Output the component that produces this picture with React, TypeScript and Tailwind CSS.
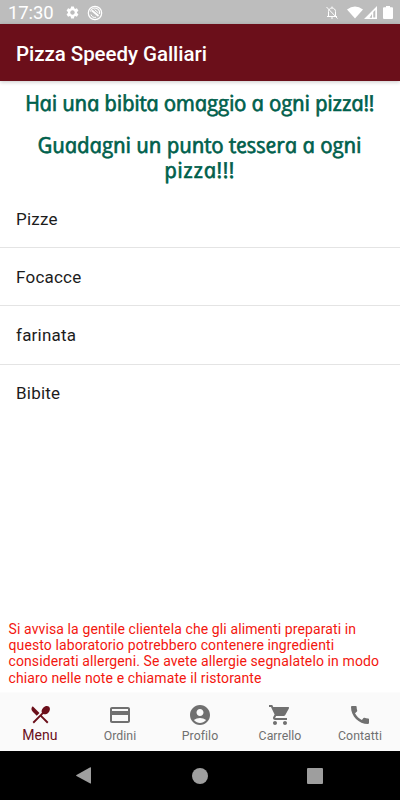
import React from "react";
import {
  MdAccountCircle,
  MdCall,
  MdPayment,
  MdRestaurantMenu,
  MdSettings,
  MdShoppingCart,
} from "react-icons/md";

const categories = ["Pizze", "Focacce", "farinata", "Bibite"];

const tabs = [
  { label: "Ordini", Icon: MdPayment },
  { label: "Profilo", Icon: MdAccountCircle },
  { label: "Carrello", Icon: MdShoppingCart },
  { label: "Contatti", Icon: MdCall },
];

function StatusBar() {
  return (
    <div className="flex h-[24px] items-center bg-[#bdbdbd] pr-[7px] pl-[8px] text-white">
      <span className="w-[57px] pt-[2px] text-[18.500px] leading-none tracking-[-0.100px]">17:30</span>
      <MdSettings className="mt-px size-[15px]" />
      <svg className="mt-px ml-[7px] size-[16px]" viewBox="0 0 16 16" fill="none" stroke="currentColor">
        <circle cx="8" cy="8" r="6.700" strokeWidth="1.200" />
        <path d="M3.500 6.500A4.600 4.600 0 0 1 12.500 9" strokeWidth="1.200" />
        <path d="M5 5.500l6.500 5.500" strokeWidth="1.800" />
        <path d="M4 9.500a4.300 4.300 0 0 0 5 2.800M7.500 4.500l4 3.500" strokeWidth="1" />
      </svg>
      <svg className="mt-px ml-auto h-[15px] w-[14px]" viewBox="0 0 14 15" fill="none" stroke="currentColor">
        <path d="M3.500 11V6.500C3.500 4.500 5 3 7 3s3.500 1.500 3.500 3.500V11M2 11.500h10M6 13h2M7 1.500V3M1.500 2l11 11.500" strokeWidth="1" />
      </svg>
      <svg className="mt-px ml-[8px] h-[13px] w-[16px]" viewBox="0 0 17 13" fill="currentColor">
        <path d="M0 3.300Q8.500-3 17 3.300L8.500 13Z" />
      </svg>
      <svg className="mt-px ml-px h-[13px] w-[13px]" viewBox="0 0 13 13" fill="currentColor">
        <path fillRule="evenodd" d="M0 13L13 0V13ZM5.500 11.700H8V8ZM9.300 6v5.500h2V4Z" />
      </svg>
      <svg className="mt-px ml-[6px] h-[13px] w-[10px]" viewBox="0 0 10 13" fill="currentColor">
        <path d="M3 0h4v1.300h2q1 0 1 1V12q0 1-1 1H1q-1 0-1-1V2.300q0-1 1-1h2Z" />
      </svg>
    </div>
  );
}

function Promo() {
  return (
    <div className="h-[109px] pt-[9px] pr-[2px] text-center font-['Open_Sans',sans-serif] text-[22px] leading-[25.500px] font-normal whitespace-nowrap text-[#00604c] italic [-webkit-text-stroke:0.600px_#00604c]">
      <p className="skew-x-[12deg] tracking-[-0.350px]">Hai una bibita omaggio a ogni pizza!!</p>
      <p className="mt-[16px] skew-x-[12deg] tracking-[-0.200px]">Guadagni un punto tessera a ogni</p>
      <p className="skew-x-[12deg] tracking-[0.450px]">pizza!!!</p>
    </div>
  );
}

export default function App() {
  return (
    <div className="flex h-[800px] w-[400px] flex-col overflow-hidden bg-white font-['Roboto',sans-serif]">
      <StatusBar />
      <header className="z-10 flex h-[57px] items-center bg-[#6b0f1a] pt-[3px] pl-[16px] text-[20.500px] font-medium tracking-[-0.050px] text-white shadow-[0_1px_4px_rgba(0,0,0,0.22)]">
        Pizza Speedy Galliari
      </header>
      <Promo />
      <ul>
        {categories.map((name) => (
          <li
            key={name}
            className="flex h-[58.200px] items-center border-b border-[#e4e4e4] pt-[2px] pl-[16px] text-[17px] tracking-[0.230px] text-[#1c1c1c] last:border-0 last:pt-px"
          >
            {name}
          </li>
        ))}
      </ul>
      <p className="mt-auto pb-[7px] pl-[8.500px] text-[14px] leading-[16.300px] tracking-[0.110px] text-[#f3170f]">
        Si avvisa la gentile clientela che gli alimenti preparati in
        <br />
        questo laboratorio potrebbero contenere ingredienti
        <br />
        considerati allergeni. Se avete allergie segnalatelo in modo
        <br />
        chiaro nelle note e chiamate il ristorante
      </p>
      <nav className="grid h-[58px] grid-cols-5 bg-[#fafafa] shadow-[0_0_1px_rgba(0,0,0,0.08)]">
        <div className="flex flex-col items-center pt-[10px] text-[#6b0f1a]">
          <MdRestaurantMenu className="size-[23px]" />
          <span className="text-[14px] leading-[18px] tracking-[0.050px]">Menu</span>
        </div>
        {tabs.map(({ label, Icon }) => (
          <div key={label} className="flex flex-col items-center pt-[10px] text-[#707070]">
            <Icon className="size-[24px]" />
            <span className="text-[12.300px] leading-[18px] tracking-[0.050px]">{label}</span>
          </div>
        ))}
      </nav>
      <div className="flex h-[49px] items-center bg-black text-[#9e9e9e]">
        <svg className="ml-[76px] h-[17px] w-[15px]" viewBox="0 0 15 17" fill="currentColor">
          <path d="M.5 8L14.300.300q.7-.2.7.5V16q0 .8-.7.500L.5 9q-.8-.500 0-1Z" />
        </svg>
        <span className="ml-[101px] size-[16px] rounded-full bg-[#9e9e9e]" />
        <span className="ml-[99px] size-[16px] rounded-[1px] bg-[#9e9e9e]" />
      </div>
    </div>
  );
}
